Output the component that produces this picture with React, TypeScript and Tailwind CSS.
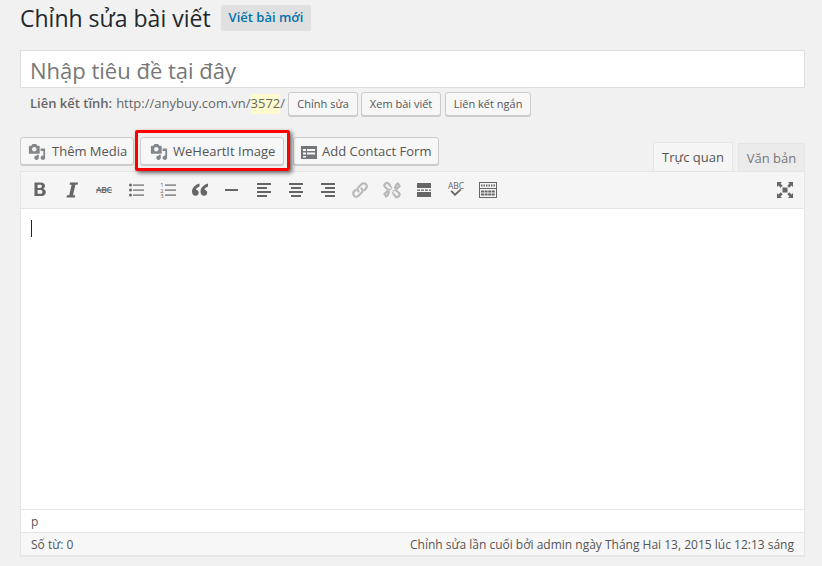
import React from "react";

const Media = () => (
  <svg width="18" height="18" viewBox="0 0 20 20" className="shrink-0" fill="#82878c">
    <path d="M13 11V4c0-.55-.45-1-1-1h-1.670L9 1H5L3.670 3H2c-.55 0-1 .45-1 1v7c0 .55.45 1 1 1h10c.55 0 1-.45 1-1zM7 4.500c1.380 0 2.500 1.120 2.500 2.500S8.380 9.500 7 9.500 4.500 8.380 4.500 7 5.620 4.500 7 4.500zM14 6h5v10.500c0 1.380-1.120 2.500-2.500 2.500S14 17.880 14 16.500s1.120-2.500 2.500-2.500c.17 0 .34.020.5.050V9h-3V6zm-4 8.050V13h2v3.500c0 1.380-1.120 2.500-2.500 2.500S7 17.880 7 16.500 8.120 14 9.500 14c.17 0 .34.020.5.050z" />
  </svg>
);

const I = ({ children, w = 20 }: { children: React.ReactNode; w?: number }) => (
  <div className="w-[32px] h-[20px] flex items-center justify-center shrink-0">
    <svg width={w} height="20" viewBox="0 0 20 20" fill="#666666" className="overflow-visible">{children}</svg>
  </div>
);

const Lines = ({ rows, h = 2 }: { rows: number[][]; h?: number }) => (
  <>
    {rows.map((r, i) => (
      <rect key={i} x={r[0]} y={r[1]} width={r[2]} height={h} />
    ))}
  </>
);

const Btn = ({ children, cls = "" }: { children: React.ReactNode; cls?: string }) => (
  <div className={"h-[24px] flex items-center justify-center text-[11px] text-[#555] bg-[#f7f7f7] border border-[#cccccc] rounded-[3px] shadow-[0_1px_0_#cccccc] whitespace-nowrap " + cls}>
    {children}
  </div>
);

const Toolbar = () => (
  <div className="h-[37px] bg-[#f5f5f5] border-b border-[#e5e5e5] flex items-center pl-[3px] pr-[3px]">
    <I><path d="M4.500 2.500h6.200c2.700 0 4.300 1.300 4.300 3.400 0 1.400-.8 2.500-2.100 2.900 1.800.3 2.900 1.600 2.900 3.400 0 2.400-1.900 3.900-4.700 3.900H4.500zM7.600 4.800v3.100h2.400c1.200 0 1.900-.6 1.900-1.600s-.7-1.500-1.900-1.500zM7.600 10.100v3.700h2.700c1.300 0 2.100-.7 2.100-1.900s-.8-1.800-2.100-1.800z" /></I>
    <I><path d="M8 2.500h8l-.4 2.200h-2.200L11 15.300h2.200l-.4 2.200H4.500l.4-2.200h2.300L9.600 4.700H7.600z" /></I>
    <I>
      <text x="10" y="13" textAnchor="middle" fontFamily="'Open Sans', sans-serif" fontSize="8.500" fontWeight="600" fill="#666666" textLength="16">ABC</text>
      <rect x="2" y="9.500" width="16" height="1" />
    </I>
    <I>
      <circle cx="4.500" cy="5" r="1.500" /><circle cx="4.500" cy="10" r="1.500" /><circle cx="4.500" cy="15" r="1.500" />
      <Lines h={1.200} rows={[[7, 4.500, 11], [7, 9.500, 11], [7, 14.500, 11]]} />
    </I>
    <I>
      <text x="4" y="7" textAnchor="middle" fontFamily="'Open Sans', sans-serif" fontSize="6" fill="#666666">1</text>
      <text x="4" y="12.500" textAnchor="middle" fontFamily="'Open Sans', sans-serif" fontSize="6" fill="#666666">2</text>
      <text x="4" y="18" textAnchor="middle" fontFamily="'Open Sans', sans-serif" fontSize="6" fill="#666666">3</text>
      <Lines h={1.200} rows={[[7, 4.500, 11], [7, 9.500, 11], [7, 14.500, 11]]} />
    </I>
    <I><path d="M9.500 3.500C5.500 4.500 2 7.500 2 11.500c0 2.700 1.500 4.300 3.500 4.300 1.800 0 3.200-1.300 3.200-3 0-1.700-1.200-2.900-2.800-3 .3-1.300 1.500-2.500 3.600-3.300zM18 3.500c-4 1-7.500 4-7.500 8 0 2.700 1.500 4.300 3.500 4.300 1.800 0 3.200-1.300 3.200-3 0-1.700-1.200-2.900-2.800-3 .3-1.300 1.500-2.500 3.600-3.300z" /></I>
    <I><rect x="3" y="9" width="13" height="2" /></I>
    <I><Lines rows={[[3, 3, 14], [3, 7, 10], [3, 11, 14], [3, 15, 10]]} /></I>
    <I><Lines rows={[[3, 3, 14], [5, 7, 10], [3, 11, 14], [5, 15, 10]]} /></I>
    <I><Lines rows={[[3, 3, 14], [7, 7, 10], [3, 11, 14], [7, 15, 10]]} /></I>
    <I>
      <g fill="none" stroke="#b9b9b9" strokeWidth="2.200" strokeLinecap="round">
        <path d="M8.500 11.500a3 3 0 0 1 0-4.300l3-3a3.100 3.100 0 0 1 4.400 4.400l-1.500 1.500" />
        <path d="M11.500 8.500a3 3 0 0 1 0 4.300l-3 3a3.100 3.100 0 0 1-4.400-4.400l1.500-1.500" />
      </g>
    </I>
    <I>
      <g fill="none" stroke="#b9b9b9" strokeWidth="2.200" strokeLinecap="round">
        <path d="M8 5.500 6.500 3.500A2.500 2.500 0 0 0 3 7l3 2.500" />
        <path d="M12 14.500l1.500 2a2.500 2.500 0 0 0 3.500-3.500l-3-2.500" />
        <path d="M13 8l1.500-3.500 1.500-1 1.500 2.500-3 3" />
        <path d="M7 12l-1.500 3.500-1.500 1L2.500 14l3-3" />
        <path strokeWidth="1.400" d="M8.500 9.500h-1M12.500 10.500h-1M9.500 8 9 6.500M10.500 12l.5 1.500" />
      </g>
    </I>
    <I>
      <rect x="3" y="3" width="14" height="5" />
      <rect x="3" y="9.500" width="3" height="1.300" /><rect x="7" y="9.500" width="3" height="1.300" /><rect x="11" y="9.500" width="3" height="1.300" /><rect x="15" y="9.500" width="2" height="1.300" />
      <rect x="3" y="12" width="14" height="5" />
    </I>
    <I>
      <text x="10" y="8.500" textAnchor="middle" fontFamily="'Open Sans', sans-serif" fontSize="8.500" fill="#666666" textLength="16">ABC</text>
      <path d="M4.500 11.500l1.300-1.300 3.200 3.200 5.300-4.600 1.200 1.300-6.500 6z" />
    </I>
    <I>
      <g fill="none" stroke="#666666">
        <rect x="1.500" y="2.500" width="17" height="15" />
        <path d="M1.500 8.500h17" />
        <path d="M3 5.500h14" strokeWidth="2" strokeDasharray="1.500 1" />
        <path d="M3 11.500h14M3 14.500h14" strokeWidth="2" strokeDasharray="3 .6" />
      </g>
    </I>
    <div className="ml-auto">
      <I>
        <path d="M7.500 7.500h5v5h-5zM2 2h5L5.500 3.500 7.700 5.700 5.700 7.700 3.500 5.500 2 7zM18 2v5l-1.500-1.500-2.200 2.200-2-2 2.200-2.200L13 2zM2 18v-5l1.500 1.500 2.200-2.200 2 2-2.200 2.200L7 18zM18 18h-5l1.500-1.500-2.200-2.200 2-2 2.200 2.200L18 13z" />
      </I>
    </div>
  </div>
);

export default function App() {
  return (
    <div className="w-[822px] h-[566px] overflow-hidden bg-[#f1f1f1] pl-[20px] pr-[17px] font-['Open_Sans',sans-serif] text-[#444]">
      <div className="h-[50px] flex items-start pt-[5px]">
        <h1 className="text-[23px] leading-[26px] font-normal text-[#23282d] whitespace-nowrap">Chỉnh sửa bài viết</h1>
        <div className="ml-[10px] h-[26px] px-[8px] flex items-center bg-[#e0e0e0] rounded-[2px] text-[13px] font-semibold text-[#0073aa] whitespace-nowrap">Viết bài mới</div>
      </div>

      <div className="h-[38px] bg-white border border-[#dddddd] pl-[9px] pt-[2px] flex items-center text-[22px] text-[#777] whitespace-nowrap">Nhập tiêu đề tại đây</div>

      <div className="h-[24px] mt-[4px] pl-[10px] flex items-center text-[13px] text-[#666] whitespace-nowrap">
        <span className="font-semibold">Liên kết tĩnh:</span>
        <span className="ml-[4px]">http://anybuy.com.vn/</span>
        <span className="bg-[#fffbcc]">3572</span>
        <span>/</span>
        <Btn cls="ml-[3px] w-[70px]">Chỉnh sửa</Btn>
        <Btn cls="ml-[3px] w-[80px]">Xem bài viết</Btn>
        <Btn cls="ml-[4px] w-[86px]">Liên kết ngắn</Btn>
      </div>

      <div className="h-[34px] mt-[21px] flex items-start relative">
        <div className="h-[28px] w-[114px] flex items-center gap-[6px] pl-[7px] pt-[1px] bg-[#f7f7f7] border border-[#cccccc] rounded-[3px] shadow-[0_1px_0_#cccccc] text-[13px] text-[#555] whitespace-nowrap"><Media />Thêm Media</div>
        <div className="ml-[6px] relative h-[28px] w-[144px] flex items-center gap-[5px] pl-[9px] pt-[1px] bg-[#f7f7f7] border border-[#cccccc] rounded-[3px] shadow-[0_1px_0_#cccccc] text-[13px] text-[#555] whitespace-nowrap">
          <Media />WeHeartIt Image
          <div className="absolute left-[-6px] top-[-8px] w-[155px] h-[41px] border-[3px] border-[#ff0000] rounded-[2px] shadow-[2px_2px_4px_rgba(0,0,0,0.6)] pointer-events-none" />
        </div>
        <div className="ml-[9px] h-[28px] w-[146px] flex items-center gap-[4px] pl-[6px] pt-[1px] bg-[#f7f7f7] border border-[#cccccc] rounded-[3px] shadow-[0_1px_0_#cccccc] text-[13px] text-[#555] whitespace-nowrap">
          <svg width="18" height="18" viewBox="0 0 18 18" className="shrink-0">
            <path fill="#72777c" fillRule="evenodd" d="M1 3h16v13H1zM3 6v2h3V6zM7 6v2h8V6zM3 9.500v2h3v-2zM7 9.500v2h8v-2zM3 13v1.500h3V13z" />
          </svg>
          Add Contact Form
        </div>
        <div className="ml-auto self-end flex items-end h-[29px]">
          <div className="h-[29px] w-[80px] flex items-center justify-center pt-[2px] bg-[#f5f5f5] border border-b-0 border-[#e5e5e5] text-[13px] text-[#555] whitespace-nowrap">Trực quan</div>
          <div className="ml-[5px] h-[28px] w-[67px] flex items-center justify-center pt-[2px] bg-[#ebebeb] border border-b-0 border-[#e5e5e5] text-[13px] text-[#777] whitespace-nowrap">Văn bản</div>
        </div>
      </div>

      <div className="h-[385px] border border-[#e5e5e5] bg-white flex flex-col shadow-[0_1px_1px_rgba(0,0,0,0.04)]">
        <Toolbar />
        <div className="flex-1 pl-[10px] pt-[11px]">
          <div className="w-px h-[17px] bg-[#222]" />
        </div>
        <div className="h-[23px] border-t border-[#e5e5e5] pl-[10px] pt-[2px] flex items-center text-[12px] text-[#555]">p</div>
        <div className="h-[23px] border-t border-[#e5e5e5] bg-[#f7f7f7] px-[10px] pt-[1px] flex items-center justify-between text-[12px] text-[#555] whitespace-nowrap">
          <span>Số từ: 0</span>
          <span>Chỉnh sửa lần cuối bởi admin ngày Tháng Hai 13, 2015 lúc 12:13 sáng</span>
        </div>
      </div>
    </div>
  );
}
